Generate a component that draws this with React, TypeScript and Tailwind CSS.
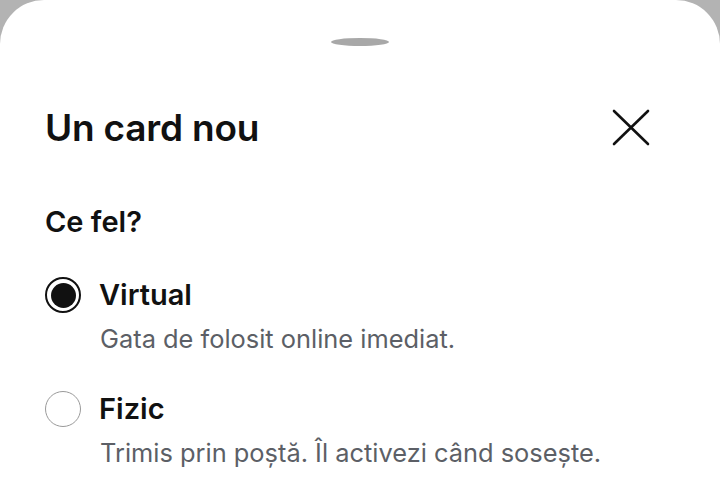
import { useState } from "react";

type Kind = "virtual" | "fizic";

const options: { id: Kind; label: string; hint: string }[] = [
  { id: "virtual", label: "Virtual", hint: "Gata de folosit online imediat." },
  { id: "fizic", label: "Fizic", hint: "Trimis prin poștă. Îl activezi când sosește." },
];

function CloseIcon() {
  return (
    <svg width="40" height="40" viewBox="0 0 40 40" fill="none" stroke="#111111" strokeWidth="2.6" strokeLinecap="round">
      <path d="M3 3 37 36" />
      <path d="M37 3 3 36" />
    </svg>
  );
}

export default function App() {
  const [kind, setKind] = useState<Kind>("virtual");

  return (
    <div className="h-[485px] w-[720px] overflow-hidden bg-[#b3b3b3] font-['Inter',sans-serif]">
      <div className="flex h-full flex-col rounded-t-[44px] bg-white px-[45px]">
        {/* handle */}
        <div className="flex justify-center pt-[38px]">
          <div className="h-[8px] w-[58px] rounded-[50%] bg-[#a8a8a8]" />
        </div>

        <div className="mt-[60px] flex items-center justify-between">
          <h1 className="text-[37px] font-semibold leading-[44px] tracking-[-0.2px] text-[#111111]">Un card nou</h1>
          <button className="mr-[24px] flex items-center justify-center" aria-label="Închide">
            <CloseIcon />
          </button>
        </div>

        <h2 className="mt-[55px] text-[29px] font-semibold leading-[34px] text-[#111111]">Ce fel?</h2>

        <div className="mt-[38px] flex flex-col gap-[37px]">
          {options.map((o) => {
            const active = kind === o.id;
            return (
              <button key={o.id} onClick={() => setKind(o.id)} className="flex flex-col items-start text-left">
                <div className="flex h-[36px] items-center gap-[18px]">
                  {active ? (
                    <span className="flex h-[36px] w-[36px] items-center justify-center rounded-full border-[2.5px] border-[#111111]">
                      <span className="h-[25px] w-[25px] rounded-full bg-[#111111]" />
                    </span>
                  ) : (
                    <span className="h-[36px] w-[36px] rounded-full border-[1.5px] border-[#9a9a9a]" />
                  )}
                  <span className="text-[29px] font-semibold leading-[34px] text-[#111111]">{o.label}</span>
                </div>
                <span className="ml-[55px] mt-[11px] text-[25.4px] leading-[30px] text-[#5c5f66]">{o.hint}</span>
              </button>
            );
          })}
        </div>
      </div>
    </div>
  );
}
